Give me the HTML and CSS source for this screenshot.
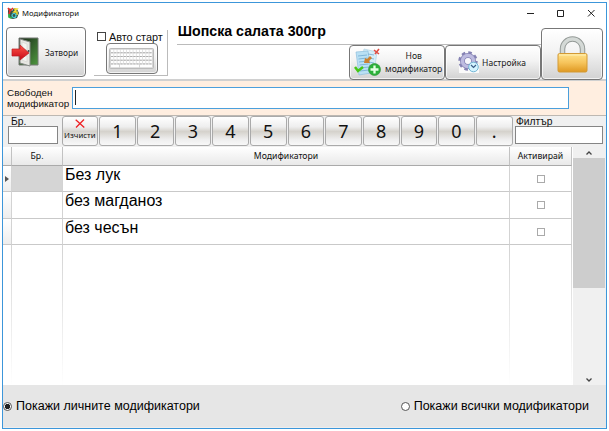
FILE: index.html
```html
<!DOCTYPE html>
<html lang="bg">
<head>
<meta charset="utf-8">
<title>Модификатори</title>
<link rel="stylesheet" href="styles.css">
</head>
<body>
<main class="window">
  <header class="titlebar">
    <svg class="app-icon" width="12" height="12" viewBox="0 0 12 12" fill="none">
      <path d="M1 3 3 1l2 3 2-3 3 1 2 4-2 5-4 1-4-1-1-5z" fill="#35534a"/>
      <path d="m1 1 2 3 3-3M3 4l-1 3" stroke="#e82f28" stroke-width="1.6"/>
      <path d="M7 2h3L7 5h3v3" stroke="#f5dd35" stroke-width="1.5"/>
      <path d="M2 7v3l3 1" stroke="#32b447" stroke-width="1.7"/>
      <circle cx="7" cy="8.5" r="2" stroke="#4ad4dd" stroke-width="1.2"/>
    </svg>
    <span class="caption">Модификатори</span>
    <svg class="controls" width="70" height="12" viewBox="0 0 70 12" fill="none" stroke="#222">
      <path d="M1 6.500h7M31.500 3.500h6v6h-6zM62 3l6.500 6.500M68.500 3 62 9.500"/>
    </svg>
  </header>

  <section class="toolbar">
    <button class="btn close-btn">
      <svg width="29" height="30" viewBox="0 0 29 30">
        <defs><linearGradient id="door" x1="0" y1="0" x2="1" y2="1"><stop offset="0" stop-color="#182718"/><stop offset="1" stop-color="#4e983e"/></linearGradient>
        <linearGradient id="arrow" x1="0" y1="0" x2="0" y2="1"><stop offset="0" stop-color="#ff5548"/><stop offset="1" stop-color="#c70716"/></linearGradient></defs>
        <path d="M8 1h19v27H8z" fill="url(#door)" stroke="#757975"/>
        <path d="m9 2 10 3v24L9 26z" fill="#e7e7e2" stroke="#858985"/>
        <path d="m11 5 5 2v6l-5-1zM11 18l5 1v6l-5-2z" fill="#f4f4f0" stroke="#d0d0cc" stroke-width=".6"/>
        <circle cx="17.500" cy="14" r="1" fill="#444"/>
        <path d="M1 12h8V8l9 8-9 7v-4H1z" fill="url(#arrow)" stroke="#bc1b20" stroke-width=".7"/>
      </svg>
      <span>Затвори</span>
    </button>
    <div class="auto">
      <label class="auto-label"><i class="check"></i><span>Авто старт</span></label>
      <button class="btn kb-btn">
        <svg width="45" height="21" viewBox="0 0 45 21">
          <rect x=".5" y=".5" width="44" height="20" rx="1" fill="#d6d6d6" stroke="#bbb"/>
          <g stroke="#fff" stroke-width="2.700" fill="none">
            <path d="M2 3h41M2 6.700h41M2 10.400h41M2 14.100h41" stroke-dasharray="2.500 .7"/>
            <path d="M2 17.800h8m1 0h19m1 0h12"/>
          </g>
          <path d="M2 4.800h41M2 8.500h41M2 12.200h41M2 15.900h41" stroke="#999" stroke-width=".7" stroke-dasharray="2 1.200"/>
        </svg>
      </button>
    </div>
    <div class="main-tools">
      <h1>Шопска салата 300гр</h1>
      <div class="actions">
        <button class="btn new-btn">
          <svg width="27" height="29" viewBox="0 0 27 29">
            <path d="m10 1 13 3-3 20-13-3z" fill="#d5edf8" stroke="#b1d4e5" stroke-width=".7"/>
            <path d="m2 4 12-1 3 22-12 2z" fill="#b9e0f4" stroke="#8ebfdd" stroke-width=".7"/>
            <path d="m4 8 9-1M4.500 11l9-1M5 14l9-1M5.500 17l9-1M6 20l9-1M6 23l9-1M14 6l6 1M15 10l5 1M15 14l5 1" stroke="#71abd0" stroke-width=".8"/>
            <path d="m20 2 5 4m0-5-4 5" stroke="#e14d43" stroke-width="1.600"/>
            <path d="m10 15 1-5 2 1 3-3 2 2-3 3 1 2z" fill="#cc8030"/>
            <path d="m1 19 3 4 5-4" fill="none" stroke="#45c717" stroke-width="2.500"/>
            <circle cx="20.500" cy="21.500" r="6" fill="#2bb13a" stroke="#37963f" stroke-width=".7"/>
            <path d="M20.500 17.500v8m-4-4h8" stroke="#e5ffe5" stroke-width="2.300"/>
          </svg>
          <span>Нов<br>модификатор</span>
        </button>
        <button class="btn set-btn">
          <svg width="22" height="23" viewBox="0 0 22 23">
            <path d="M1 13h20v9H1z" fill="#fafafa"/>
            <circle cx="10" cy="10" r="8.300" fill="none" stroke="#8582b3" stroke-width="2.800" stroke-dasharray="3.500 3.017"/>
            <circle cx="10" cy="10" r="5.500" fill="none" stroke="#8582b3" stroke-width="5"/>
            <circle cx="10" cy="10" r="5.500" fill="none" stroke="#bdbbe0" stroke-width="3.500"/>
            <circle cx="10" cy="10" r="2.800" fill="#f7f7fc"/>
            <circle cx="15.500" cy="16" r="4.800" fill="#d5f4ff" stroke="#70b4d3"/>
            <path d="m13 14 2.500 2.500L18 14" fill="none" stroke="#3b5d86" stroke-width="1.200"/>
          </svg>
          <span>Настройка</span>
        </button>
      </div>
    </div>
    <button class="btn lock-btn">
      <svg width="31" height="37" viewBox="0 0 31 37">
        <defs><linearGradient id="gold" x1="0" y1="0" x2="0" y2="1"><stop offset="0" stop-color="#ffe28a"/><stop offset=".5" stop-color="#f6c45b"/><stop offset="1" stop-color="#df9821"/></linearGradient></defs>
        <path d="M5.500 20v-7a10 10 0 0 1 20 0v7" fill="none" stroke="#939996" stroke-width="5.500"/>
        <path d="M5.500 20v-7a10 10 0 0 1 20 0v7" fill="none" stroke="#d4d9d6" stroke-width="3.500"/>
        <rect x="1" y="17.500" width="29" height="18.500" rx="1.500" fill="url(#gold)" stroke="#d39a35"/>
        <path d="M2 19h27" stroke="#fff0b5"/>
      </svg>
    </button>
  </section>

  <section class="free">
    <label>Свободен<br>модификатор</label>
    <div class="free-input"><i class="caret"></i></div>
  </section>

  <section class="keypad">
    <div class="field qty"><label>Бр.</label><div class="box"></div></div>
    <div class="keys">
      <button class="key clear">
        <svg width="10" height="9" viewBox="0 0 10 9" fill="none" stroke="#ee2024" stroke-width="1.300"><path d="m.7.7 8.600 7.800M9 .5 1 8.500"/></svg>
        <span>Изчисти</span>
      </button>
      <button class="key">1</button><button class="key">2</button><button class="key">3</button><button class="key">4</button><button class="key">5</button><button class="key">6</button><button class="key">7</button><button class="key">8</button><button class="key">9</button><button class="key">0</button><button class="key">.</button>
    </div>
    <div class="field filter"><label>Филтър</label><div class="box"></div></div>
  </section>

  <section class="content">
    <div class="grid">
      <div class="row head"><div></div><div>Бр.</div><div>Модификатори</div><div>Активирай</div></div>
      <div class="row"><div class="ind"><svg width="4" height="6" viewBox="0 0 4 6"><path d="M0 0v6l4-3z" fill="#555"/></svg></div><div class="selected"></div><div class="name">Без лук</div><div class="act"><i></i></div></div>
      <div class="row"><div class="ind"></div><div></div><div class="name">без магданоз</div><div class="act"><i></i></div></div>
      <div class="row"><div class="ind"></div><div></div><div class="name">без чесън</div><div class="act"><i></i></div></div>
      <div class="row rest"><div></div><div></div><div></div><div></div></div>
    </div>
    <div class="scroll">
      <svg width="6" height="4" viewBox="0 0 6 4" fill="none" stroke="#444" stroke-width="1.300"><path d="m.5 3.500 2.500-2.500 2.500 2.500"/></svg>
      <div class="thumb"></div>
      <svg width="6" height="4" viewBox="0 0 6 4" fill="none" stroke="#444" stroke-width="1.300"><path d="m.5.5 2.500 2.500L5.500.5"/></svg>
    </div>
  </section>

  <footer>
    <label><i class="radio on"></i><span>Покажи личните модификатори</span></label>
    <label><i class="radio"></i><span>Покажи всички модификатори</span></label>
  </footer>
</main>
</body>
</html>
```
FILE: styles.css
```css
* { box-sizing: border-box; }
body { margin: 0; padding: 2px; background: #fff; width: 609px; height: 431px; overflow: hidden; font-family: "Liberation Sans", sans-serif; color: #111; }
button { padding: 0; margin: 0; color: #222; font: 10px "Noto Sans", sans-serif; }
svg { display: block; flex: none; }
.window { width: 605px; height: 427px; border: 1px solid #3c96da; display: flex; flex-direction: column; background: #fff; }

.titlebar { height: 20px; flex: none; display: flex; align-items: center; padding: 0 10px 0 4px; }
.caption { font: 7.700px "Noto Sans", sans-serif; margin-left: 3px; }
.controls { margin-left: auto; }

.toolbar { height: 58px; flex: none; display: flex; align-items: flex-start; padding: 0 3px 0 3px; border-bottom: 2px solid #d0d0d0; }
.btn { display: flex; align-items: center; border: 1.500px solid #777; border-radius: 4px; background: linear-gradient(#fff, #f3f3f3 45%, #d2d2d2); box-shadow: inset 0 0 0 1px #ffffffb0; }
.close-btn { width: 80px; height: 50px; margin-top: 4px; padding-left: 4px; gap: 5px; font-size: 8.400px; }
.auto { width: 74px; height: 46px; margin: 7px 0 0 8px; border-right: 1px solid #bbb; border-bottom: 1px solid #bbb; }
.auto-label { display: flex; align-items: center; height: 13px; padding-left: 3px; gap: 3px; font-size: 10.900px; white-space: nowrap; }
.check { width: 9px; height: 9px; border: 1px solid #444; background: #fff; }
.kb-btn { width: 52px; height: 31px; margin-left: 12px; justify-content: center; }
.main-tools { width: 365px; margin-left: 9px; }
h1 { margin: 0; height: 22px; padding-left: 1px; font-size: 14.200px; line-height: 17px; border-bottom: 1px solid #bbb; color: #000; white-space: nowrap; }
.actions { display: flex; justify-content: flex-end; height: 35px; }
.new-btn, .set-btn { height: 35px; width: 96px; }
.new-btn { padding-left: 4px; gap: 4px; font-size: 8.600px; line-height: 12.500px; }
.set-btn { padding-left: 12px; gap: 2px; font-size: 8.500px; }
.lock-btn { width: 62px; height: 52px; margin-top: 5px; justify-content: center; }

.free { height: 35px; flex: none; background: #ffeee0; border-bottom: 1px solid #bdb8b2; display: flex; align-items: center; }
.free label { width: 65px; padding-left: 4px; margin-right: 4px; font-size: 9.900px; line-height: 11px; }
.free-input { width: 497px; height: 22px; border: 1px solid #4b9fdc; background: #fff; padding: 2px; }
.caret { display: block; width: 1px; height: 15px; background: #222; }

.keypad { height: 31px; flex: none; background: #f0f0f0; display: flex; padding-right: 3px; }
.field label { display: block; height: 10px; font-size: 10.300px; line-height: 11px; }
.box { height: 18px; border: 1px solid #858585; background: #fff; }
.qty { width: 50px; margin-left: 5px; }
.qty label { padding-left: 3px; }
.filter { width: 88px; margin-left: 2px; }
.filter label { padding-left: 1px; }
.keys { width: 452px; height: 30px; margin-left: 3px; display: grid; grid-template-columns: repeat(12, 1fr); }
.key { margin: 0 .5px; height: 30px; border: 1px solid #aaa; border-radius: 3px; background: linear-gradient(#fff, #eee 35%, #d5d2cc 52%, #eee 80%, #f8f8f8); font-size: 18px; line-height: 28px; color: #111; }
.clear { display: flex; flex-direction: column; align-items: center; padding-top: 2px; font-size: 7.800px; line-height: 15px; }

.content { height: 238px; flex: none; display: flex; }
.grid { width: 569px; display: flex; flex-direction: column; }
.row { display: grid; grid-template-columns: 9px 51px 447px 62px; height: 26.300px; flex: none; }
.row > div { border-right: 1px solid #d3d3d3; border-bottom: 1px solid #c9c9c9; }
.row.head { height: 19px; }
.head > div { display: flex; align-items: center; justify-content: center; font: 8.700px "Noto Sans", sans-serif; background: linear-gradient(#fff, #e9e9e9); border-bottom-color: #aaa; border-right-color: #c2c2c2; }
.row > .ind { display: flex; align-items: center; justify-content: center; background: linear-gradient(#fff, #eee); }
.row > .selected { background: #d5d5d5; }
.name { padding-left: 2px; font-size: 16px; line-height: 17px; color: #000; }
.act { display: flex; align-items: center; justify-content: center; padding-top: 1px; }
.act i { width: 8px; height: 8px; border: 1px solid #aaa; }
.row.rest { flex: 1; height: auto; }
.rest > div { border-bottom: 0; border-right: 1px solid; border-image: linear-gradient(#d3d3d3, #fff) 1; border-image-width: 0 1px 0 0; }
.scroll { flex: 1; margin-left: 1px; background: #f0f0f0; display: flex; flex-direction: column; align-items: center; padding: 4px 1px 3px 0; }
.thumb { width: 100%; height: 130px; margin-top: 3px; margin-bottom: auto; background: #cdcdcd; }

footer { flex: 1; background: #e6e6e6; display: flex; justify-content: space-between; padding: 0 17px 0 0; font-size: 12.500px; color: #000; border-bottom: 1px solid #eee; }
footer label { display: flex; align-items: center; height: 42px; gap: 4px; white-space: nowrap; }
.radio { width: 9px; height: 9px; border: 1px solid #555; border-radius: 50%; background: #fff; }
.radio.on { background: radial-gradient(#222 0 2.300px, #fff 3px); }
```
